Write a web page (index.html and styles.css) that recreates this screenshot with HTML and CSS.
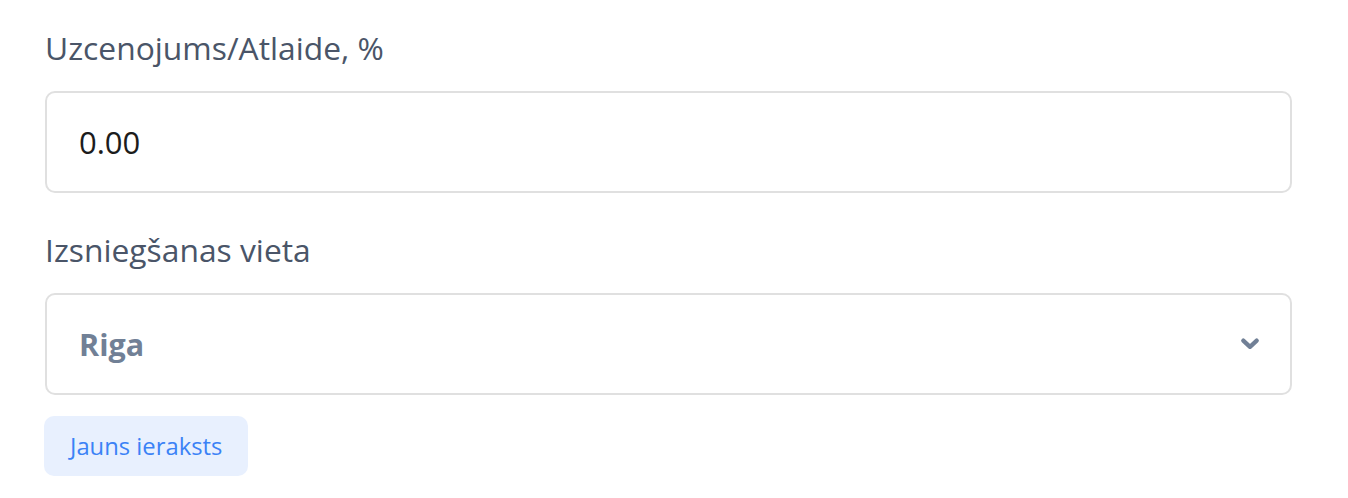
FILE: index.html
```html
<!DOCTYPE html>
<html lang="lv">
<head>
<meta charset="utf-8">
<title>Form</title>
<link rel="stylesheet" href="styles.css">
</head>
<body>
<form class="form">
  <div class="field">
    <label class="label" for="markup">Uzcenojums/Atlaide, %</label>
    <input class="control" id="markup" type="text" value="0.00">
  </div>
  <div class="field">
    <label class="label" for="place">Izsniegšanas vieta</label>
    <div class="select">
      <span class="select-value">Riga</span>
      <svg class="chevron" viewBox="0 0 18 12" width="18" height="12" aria-hidden="true">
        <path d="M2.3 2.6 L9 8.9 L15.7 2.6" fill="none" stroke="#718096" stroke-width="4.2" stroke-linecap="round" stroke-linejoin="round"/>
      </svg>
    </div>
  </div>
  <button class="btn" type="button">Jauns ieraksts</button>
</form>
</body>
</html>
```

FILE: styles.css
```css
html, body {
  margin: 0;
  padding: 0;
  background: #ffffff;
}
body {
  font-family: "Open Sans", "Noto Sans", sans-serif;
}
.form {
  width: 1247px;
  padding: 27px 0 0 45px;
  display: flex;
  flex-direction: column;
  align-items: flex-start;
}
.field {
  width: 100%;
  display: flex;
  flex-direction: column;
  margin-bottom: 21px;
}
.field + .field {
  margin-top: 15px;
}
.label {
  font-size: 31.8px;
  line-height: 42px;
  color: #4a5568;
  margin-bottom: 22px;
}
.control, .select {
  box-sizing: border-box;
  width: 1247px;
  height: 102px;
  border: 2px solid #e0e0e0;
  border-radius: 10px;
  background: #fff;
  font-family: "Open Sans", "Noto Sans", sans-serif;
  font-size: 31px;
  color: #1c1c1c;
  padding: 0 32px;
  outline: none;
}
.select {
  display: flex;
  align-items: center;
  justify-content: space-between;
  padding-right: 31px;
}
.select-value {
  font-size: 30.5px;
  font-weight: 700;
  color: #718096;
}
.chevron {
  display: block;
}
.btn {
  border: none;
  background: #e8f0fe;
  color: #3b82f6;
  font-family: "Open Sans", "Noto Sans", sans-serif;
  font-size: 23.8px;
  height: 60px;
  padding: 0 26px;
  border-radius: 10px;
  margin-left: -1px;
}
```
